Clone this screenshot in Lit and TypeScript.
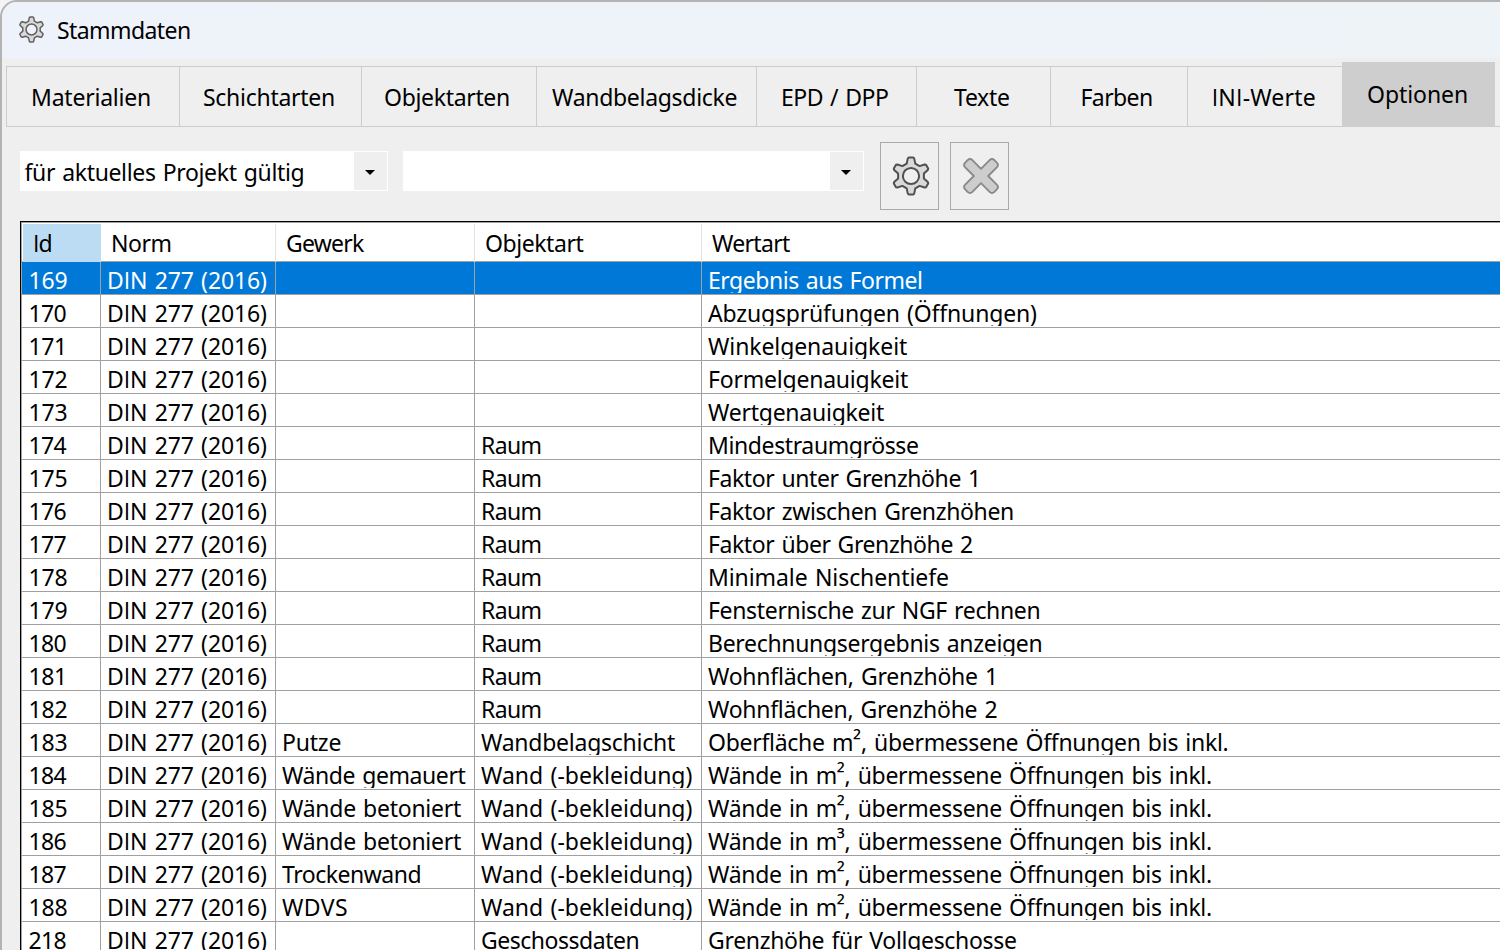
import { LitElement, html, css, svg } from "lit";
import { customElement, property } from "lit/decorators.js";
import { styleMap } from "lit/directives/style-map.js";

const SIZE = 23;
const WORD = 1.5;
const pen = document.createElement("canvas").getContext("2d")!;
const fontOf = (run: string) => `${SIZE}px ${run === "I" ? '"Open Sans"' : '"Noto Sans"'}, sans-serif`;

/** A single-line label whose glyphs start at its left edge and span `span` pixels. */
@customElement("fit-text")
class FitText extends LitElement {
  static styles = css`
    :host { display: block; white-space: pre; }
    .t { display: block; word-spacing: 1.5px; }
    .sup { position: relative; top: -2px; }
    .bar { font-family: "Open Sans", sans-serif; line-height: 0; }
  `;
  @property() text = "";
  @property({ type: Number }) span = 0;

  render() {
    const runs = this.text.split(/([²³I])/).filter((r) => r);
    let ink = 0;
    let left = 0;
    runs.forEach((r, i) => {
      pen.font = fontOf(r);
      const m = pen.measureText(r);
      ink += i === runs.length - 1 ? m.actualBoundingBoxRight : m.width;
      if (i === 0) {
        left = m.actualBoundingBoxLeft;
        ink += left;
      }
    });
    ink += WORD * (this.text.split(" ").length - 1);
    const ls = (this.span - ink) / Math.max(1, this.text.length - 1);
    return html`<span class="t" style=${styleMap({
      letterSpacing: `${ls.toFixed(3)}px`,
      marginLeft: `${left.toFixed(2)}px`,
    })}>${runs.map((r) => (r === "I" ? html`<span class="bar">I</span>` : /[²³]/.test(r) ? html`<span class="sup">${r}</span>` : r))}</span>`;
  }
}

const gearPath = (() => {
  const tooth = [[-4.3, -12.4], [-3.2, -17.6], [-2.2, -18.6], [2.2, -18.6], [3.2, -17.6], [4.3, -12.4]];
  const pts: string[] = [];
  for (let i = 0; i < 6; i++) {
    const a = (i * Math.PI) / 3;
    for (const [x, y] of tooth) {
      pts.push(`${(x * Math.cos(a) - y * Math.sin(a)).toFixed(2)} ${(x * Math.sin(a) + y * Math.cos(a)).toFixed(2)}`);
    }
  }
  return `M${pts.join("L")}ZM8.1 0A8.1 8.1 0 1 0 -8.1 0A8.1 8.1 0 1 0 8.1 0Z`;
})();

const gear = (size: number, stroke: number, color: string) => html`<svg width=${size} height=${size} viewBox="-20 -20 40 40">
  ${svg`<path d=${gearPath} fill="#d9d9d9" fill-rule="evenodd" stroke=${color} stroke-width=${stroke} stroke-linejoin="round"></path>`}
</svg>`;

const cross = html`<svg width="38" height="38" viewBox="-19 -19 38 38">
  <path d="M0 -7.2L8.6 -15.8Q11 -18.2 13.4 -15.8L15.8 -13.4Q18.2 -11 15.8 -8.6L7.2 0L15.8 8.6Q18.2 11 15.8 13.4L13.4 15.8Q11 18.2 8.6 15.8L0 7.2L-8.6 15.8Q-11 18.2 -13.4 15.8L-15.8 13.4Q-18.2 11 -15.8 8.6L-7.2 0L-15.8 -8.6Q-18.2 -11 -15.8 -13.4L-13.4 -15.8Q-11 -18.2 -8.6 -15.8Z"
    fill="#cdcdcd" stroke="#8a8a8a" stroke-width="1.9" stroke-linejoin="round"></path>
</svg>`;

const arrow = html`<svg width="10" height="5" viewBox="0 0 10 5"><path d="M0 0H10L5 5Z" fill="#000"></path></svg>`;

type Label = [text: string, span: number];

/* label, glyph span, tab width, left inset */
const tabs: [string, number, number, number][] = [
  ["Materialien", 117, 173, 27],
  ["Schichtarten", 130, 182, 25],
  ["Objektarten", 124, 175, 24],
  ["Wandbelagsdicke", 184.5, 220, 16],
  ["EPD / DPP", 105, 160, 27],
  ["Texte", 55, 134, 38],
  ["Farben", 69.5, 137, 32.5],
  ["INI-Werte", 101, 155, 26.7],
];

const heads: [string, number, number][] = [
  ["Id", 16.5, 12], ["Norm", 57.5, 12], ["Gewerk", 78, 11], ["Objektart", 97.5, 11], ["Wertart", 78, 10],
];

const none: Label = ["", 0];
const raum: Label = ["Raum", 57.5];
const wand: Label = ["Wand (-bekleidung)", 210.5];
const bet: Label = ["Wände betoniert", 179];

const rows: [string, Label, Label, Label][] = [
  ["169", none, none, ["Ergebnis aus Formel", 211]],
  ["170", none, none, ["Abzugsprüfungen (Öffnungen)", 328]],
  ["171", none, none, ["Winkelgenauigkeit", 199]],
  ["172", none, none, ["Formelgenauigkeit", 198]],
  ["173", none, none, ["Wertgenauigkeit", 176]],
  ["174", none, raum, ["Mindestraumgrösse", 208]],
  ["175", none, raum, ["Faktor unter Grenzhöhe 1", 267]],
  ["176", none, raum, ["Faktor zwischen Grenzhöhen", 303]],
  ["177", none, raum, ["Faktor über Grenzhöhe 2", 262]],
  ["178", none, raum, ["Minimale Nischentiefe", 238]],
  ["179", none, raum, ["Fensternische zur NGF rechnen", 329.5]],
  ["180", none, raum, ["Berechnungsergebnis anzeigen", 331.5]],
  ["181", none, raum, ["Wohnflächen, Grenzhöhe 1", 286]],
  ["182", none, raum, ["Wohnflächen, Grenzhöhe 2", 288.5]],
  ["183", ["Putze", 56.5], ["Wandbelagschicht", 194], ["Oberfläche m², übermessene Öffnungen bis inkl.", 518.5]],
  ["184", ["Wände gemauert", 183.5], wand, ["Wände in m², übermessene Öffnungen bis inkl.", 503]],
  ["185", bet, wand, ["Wände in m², übermessene Öffnungen bis inkl.", 503]],
  ["186", bet, wand, ["Wände in m³, übermessene Öffnungen bis inkl.", 503]],
  ["187", ["Trockenwand", 138.5], wand, ["Wände in m², übermessene Öffnungen bis inkl.", 503]],
  ["188", ["WDVS", 65], wand, ["Wände in m², übermessene Öffnungen bis inkl.", 503]],
  ["218", none, ["Geschossdaten", 156.5], ["Grenzhöhe für Vollgeschosse", 307]],
];

/** Extra inset of a label, by the side bearing of its first letter. */
const bearing = (t: string) => {
  const c = t.charAt(0);
  if ("WAT".includes(c)) return 0;
  if ("GO2".includes(c)) return 1;
  return 2;
};

@customElement("app-root")
class AppRoot extends LitElement {
  static styles = css`
    :host {
      display: block; width: 1500px; height: 950px; overflow: hidden; background: #f4f4f4;
      font-family: "Noto Sans", sans-serif; font-size: 23px; color: #000;
    }
    * { box-sizing: border-box; }
    svg { display: block; flex: none; }
    .window {
      display: flex; flex-direction: column; height: 950px; background: #efefef;
      border-left: 2px solid #b3b3b3; border-top: 2px solid #b3b3b3;
      border-top-left-radius: 17px; overflow: hidden;
    }
    .title {
      flex: none; height: 56px; display: flex; background: linear-gradient(90deg, #eef3fb, #eef3f8);
      line-height: 56px; padding-left: 16px; gap: 13px;
    }
    .title svg { margin-top: 13.5px; }
    .tabs { flex: none; display: flex; align-items: flex-end; height: 69px; padding-left: 4px; }
    .tab {
      flex: none; height: 61px; line-height: 60px; border: 1px solid #cccccc; border-right: 0;
    }
    .active { flex: none; width: 153px; height: 65px; line-height: 64px; background: #cecece; padding-left: 26px; }
    .rest { flex: 1; height: 1px; background: #cccccc; }
    .tools { flex: none; display: flex; height: 94px; padding: 15px 0 0 18px; }
    .combo { display: flex; height: 40px; margin-top: 9px; background: #fff; padding: 1px; line-height: 40px; }
    .combo.a { width: 368px; margin-right: 15px; }
    .combo.b { width: 461px; margin-right: 16px; }
    .value { flex: 1; padding-left: 3.5px; }
    .drop { width: 33px; height: 38px; background: #efefef; display: flex; justify-content: center; padding-top: 18px; }
    .drop svg { margin-right: 0.5px; }
    .btn {
      width: 59px; height: 68px; border: 1px solid #a9a9a9; margin-right: 11px; padding-left: 2px;
      display: flex; align-items: center; justify-content: center;
    }
    .grid {
      flex: 1; margin-left: 18px; border-left: 1px solid #000; border-top: 1px solid #000; background: #fff;
      overflow: hidden;
    }
    .inner { border-left: 1px solid #a0a0a0; border-top: 1px solid #a0a0a0; height: 100%; }
    .row { display: grid; grid-template-columns: 79px 175px 199px 227px 1fr; }
    .head { height: 39px; border-bottom: 1px solid #a0a0a0; padding-top: 1px; line-height: 38px; }
    .head div { border-right: 1px solid #e3e3e3; }
    .head div:first-child { background: #bcdcf4; border-color: #bcdcf4; margin-left: 1px; }
    .data { height: 33px; line-height: 36px; border-bottom: 1px solid #a0a0a0; }
    .data div { border-right: 1px solid #a0a0a0; height: 32px; padding-left: 6px; }
    .data div:first-child { padding-left: 6.4px; }
    .row div:last-child { border-right: 0; }
    .data fit-text { height: 31px; overflow: hidden; }
    .sel { background: #0078d7; color: #fff; }
  `;

  private cell([text, span]: Label) {
    return html`<div>${text
      ? html`<fit-text style=${styleMap({ paddingLeft: `${bearing(text)}px` })} .text=${text} .span=${span}></fit-text>`
      : ""}</div>`;
  }

  render() {
    return html`<div class="window">
      <div class="title">${gear(27, 2.2, "#606060")}<fit-text .text=${"Stammdaten"} .span=${132}></fit-text></div>
      <div class="tabs">
        ${tabs.map(([t, s, w, p]) => html`<div class="tab" style=${styleMap({ width: `${w}px`, paddingLeft: `${p - 1}px` })}>
          <fit-text .text=${t} .span=${s}></fit-text></div>`)}
        <div class="active"><fit-text .text=${"Optionen"} .span=${99}></fit-text></div>
        <div class="rest"></div>
      </div>
      <div class="tools">
        <div class="combo a"><div class="value"><fit-text .text=${"für aktuelles Projekt gültig"} .span=${279}></fit-text></div><div class="drop">${arrow}</div></div>
        <div class="combo b"><div class="value"></div><div class="drop">${arrow}</div></div>
        <div class="btn">${gear(40, 2, "#505050")}</div>
        <div class="btn">${cross}</div>
      </div>
      <div class="grid"><div class="inner">
        <div class="row head">${heads.map(([t, s, p]) => html`<div style=${styleMap({ paddingLeft: `${p}px` })}>
          <fit-text .text=${t} .span=${s}></fit-text></div>`)}</div>
        ${rows.map(([id, g, o, w], i) => html`<div class="row data ${i === 0 ? "sel" : ""}">
          ${this.cell([id, id.endsWith("1") ? 32.5 : 36])}${this.cell(["DIN 277 (2016)", 157])}${this.cell(g)}${this.cell(o)}${this.cell(w)}
        </div>`)}
      </div></div>
    </div>`;
  }
}
